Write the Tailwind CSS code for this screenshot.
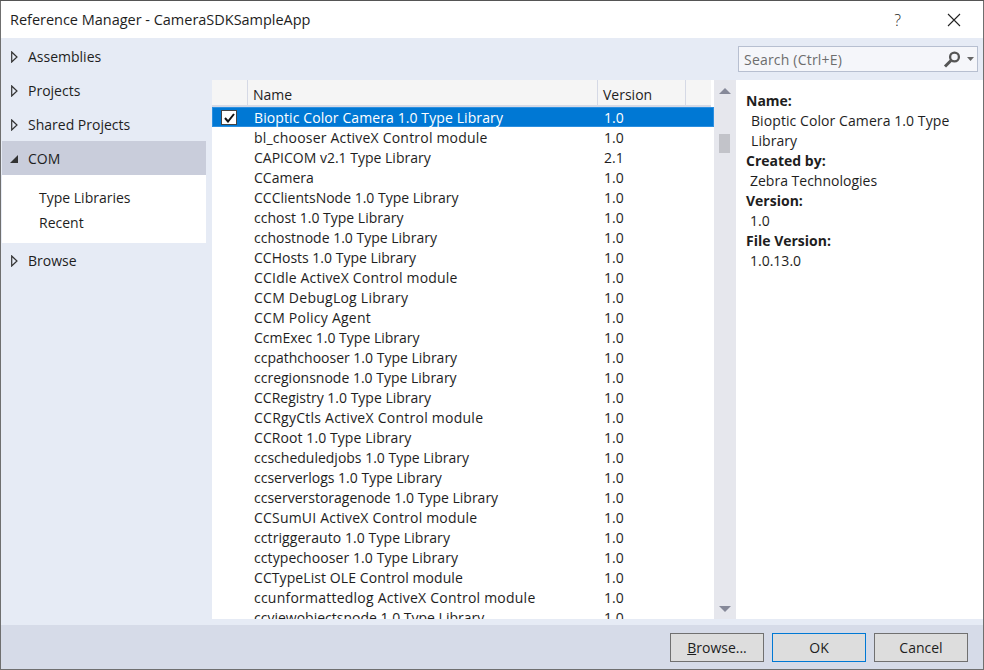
<!DOCTYPE html>
<html>
<head>
<meta charset="utf-8">
<script src="https://cdn.jsdelivr.net/npm/@tailwindcss/browser@4"></script>
</head>
<body class="m-0 w-[984px] h-[670px] overflow-hidden bg-white font-['Open_Sans','Noto_Sans',sans-serif] text-[14px] leading-[20px] text-[#1e1e1e]">
<div class="w-[984px] h-[670px] flex flex-col border-x border-b border-[#6f6f6f]">
  <div class="h-[1px] bg-[#555] -mx-[1px] shrink-0"></div>
  <header class="h-[37px] shrink-0 flex items-center justify-between bg-white pl-[9px] pr-[10px]">
    <span class="text-[14.5px] tracking-[-0.02px]">Reference Manager - CameraSDKSampleApp</span>
    <div class="flex items-center gap-[46px]">
      <span class="text-[16px] font-light">?</span>
      <svg width="14" height="14" viewBox="0 0 14 14" class="mr-[12px]"><path d="M1 1L13 13M13 1L1 13" stroke="#222" stroke-width="1.1" fill="none"/></svg>
    </div>
  </header>
  <main class="flex-1 min-h-0 bg-[#e6ebf5] flex flex-col">
    <div class="flex-1 min-h-0 flex pb-[6px]">
      <nav class="w-[211px] shrink-0 pt-[1px] pl-[1px] pr-[6px]">
        <div class="h-[34px] flex items-center gap-[10px] pl-[9px] pt-[2px]"><svg width="7" height="12" viewBox="0 0 7 12"><path d="M0.7 1L6 6L0.7 11Z" fill="none" stroke="#333" stroke-width="1.2"/></svg><span>Assemblies</span></div>
        <div class="h-[34px] flex items-center gap-[10px] pl-[9px] pt-[2px]"><svg width="7" height="12" viewBox="0 0 7 12"><path d="M0.7 1L6 6L0.7 11Z" fill="none" stroke="#333" stroke-width="1.2"/></svg><span>Projects</span></div>
        <div class="h-[34px] flex items-center gap-[10px] pl-[9px] pt-[2px]"><svg width="7" height="12" viewBox="0 0 7 12"><path d="M0.7 1L6 6L0.7 11Z" fill="none" stroke="#333" stroke-width="1.2"/></svg><span>Shared Projects</span></div>
        <div class="h-[34px] flex items-center gap-[9px] pl-[8px] pt-[2px] bg-[#c9cddb]"><svg width="9" height="9" viewBox="0 0 9 9"><path d="M0 8H8V0Z" fill="#333"/></svg><span>COM</span></div>
        <div class="h-[68px] bg-white pl-[37px] pt-[13px] flex flex-col gap-[5px]"><span>Type Libraries</span><span>Recent</span></div>
        <div class="h-[34px] flex items-center gap-[10px] pl-[9px] pt-[2px]"><svg width="7" height="12" viewBox="0 0 7 12"><path d="M0.7 1L6 6L0.7 11Z" fill="none" stroke="#333" stroke-width="1.2"/></svg><span>Browse</span></div>
      </nav>
      <div class="flex-1 min-w-0 flex flex-col">
        <div class="h-[42px] shrink-0 flex justify-end items-start pt-[8px] pr-[5px]">
          <div class="w-[240px] h-[26px] bg-[#f5f6fa] border border-[#b7bfd0] flex items-center justify-between pl-[5px] pr-[3px]">
            <span class="text-[#6d6d6d] pt-[1px] tracking-[0.2px]">Search (Ctrl+E)</span>
            <div class="flex items-center gap-[6px]">
              <svg width="18" height="17" viewBox="0 0 18 17"><circle cx="11.5" cy="6" r="4.4" fill="none" stroke="#555" stroke-width="2.3"/><path d="M8 9.5L2 15.5" stroke="#555" stroke-width="3"/></svg>
              <svg width="7" height="4" viewBox="0 0 7 4"><path d="M0 0H7L3.5 4Z" fill="#666"/></svg>
            </div>
          </div>
        </div>
        <div class="flex-1 min-h-0 flex bg-white">
          <div class="w-[502px] shrink-0 flex flex-col overflow-hidden">
            <div class="h-[27px] shrink-0 mr-[3px] flex bg-[#f5f5f5] border-b-2 border-[#d5d9e5]">
              <div class="w-[36px] border-r border-[#d5d9e5]"></div>
              <div class="w-[350px] border-r border-[#d5d9e5] pl-[5px] pt-[5px]">Name</div>
              <div class="w-[88px] border-r border-[#d5d9e5] pl-[5px] pt-[5px]">Version</div>
            </div>
            <div class="overflow-hidden flex-1 min-h-0 [&>div]:pt-[1px]">
              <div class="h-[20px] flex bg-[#0078d4] text-white shadow-[inset_0_0_0_1px_#2b8fe0]"><div class="w-[36px] pl-[9px] pt-[2px]"><div class="w-[16px] h-[15px] bg-white border border-[#444] flex items-center justify-center"><svg width="11" height="10" viewBox="0 0 11 10"><path d="M1 5L4 8.5L10 1" fill="none" stroke="#111" stroke-width="2"/></svg></div></div><div class="w-[350px] pl-[6px] tracking-[0.1px]">Bioptic Color Camera 1.0 Type Library</div><div class="pl-[6px]">1.0</div></div>
              <div class="h-[20px] flex"><div class="w-[386px] pl-[42px] tracking-[0.2px]">bl_chooser ActiveX Control module</div><div class="pl-[6px]">1.0</div></div>
              <div class="h-[20px] flex"><div class="w-[386px] pl-[42px]">CAPICOM v2.1 Type Library</div><div class="pl-[6px]">2.1</div></div>
              <div class="h-[20px] flex"><div class="w-[386px] pl-[42px]">CCamera</div><div class="pl-[6px]">1.0</div></div>
              <div class="h-[20px] flex"><div class="w-[386px] pl-[42px]">CCClientsNode 1.0 Type Library</div><div class="pl-[6px]">1.0</div></div>
              <div class="h-[20px] flex"><div class="w-[386px] pl-[42px]">cchost 1.0 Type Library</div><div class="pl-[6px]">1.0</div></div>
              <div class="h-[20px] flex"><div class="w-[386px] pl-[42px]">cchostnode 1.0 Type Library</div><div class="pl-[6px]">1.0</div></div>
              <div class="h-[20px] flex"><div class="w-[386px] pl-[42px]">CCHosts 1.0 Type Library</div><div class="pl-[6px]">1.0</div></div>
              <div class="h-[20px] flex"><div class="w-[386px] pl-[42px] tracking-[0.2px]">CCIdle ActiveX Control module</div><div class="pl-[6px]">1.0</div></div>
              <div class="h-[20px] flex"><div class="w-[386px] pl-[42px] tracking-[0.25px]">CCM DebugLog Library</div><div class="pl-[6px]">1.0</div></div>
              <div class="h-[20px] flex"><div class="w-[386px] pl-[42px] tracking-[0.25px]">CCM Policy Agent</div><div class="pl-[6px]">1.0</div></div>
              <div class="h-[20px] flex"><div class="w-[386px] pl-[42px]">CcmExec 1.0 Type Library</div><div class="pl-[6px]">1.0</div></div>
              <div class="h-[20px] flex"><div class="w-[386px] pl-[42px]">ccpathchooser 1.0 Type Library</div><div class="pl-[6px]">1.0</div></div>
              <div class="h-[20px] flex"><div class="w-[386px] pl-[42px]">ccregionsnode 1.0 Type Library</div><div class="pl-[6px]">1.0</div></div>
              <div class="h-[20px] flex"><div class="w-[386px] pl-[42px]">CCRegistry 1.0 Type Library</div><div class="pl-[6px]">1.0</div></div>
              <div class="h-[20px] flex"><div class="w-[386px] pl-[42px] tracking-[0.25px]">CCRgyCtls ActiveX Control module</div><div class="pl-[6px]">1.0</div></div>
              <div class="h-[20px] flex"><div class="w-[386px] pl-[42px] tracking-[0.08px]">CCRoot 1.0 Type Library</div><div class="pl-[6px]">1.0</div></div>
              <div class="h-[20px] flex"><div class="w-[386px] pl-[42px]">ccscheduledjobs 1.0 Type Library</div><div class="pl-[6px]">1.0</div></div>
              <div class="h-[20px] flex"><div class="w-[386px] pl-[42px]">ccserverlogs 1.0 Type Library</div><div class="pl-[6px]">1.0</div></div>
              <div class="h-[20px] flex"><div class="w-[386px] pl-[42px]">ccserverstoragenode 1.0 Type Library</div><div class="pl-[6px]">1.0</div></div>
              <div class="h-[20px] flex"><div class="w-[386px] pl-[42px] tracking-[0.2px]">CCSumUI ActiveX Control module</div><div class="pl-[6px]">1.0</div></div>
              <div class="h-[20px] flex"><div class="w-[386px] pl-[42px] tracking-[0.08px]">cctriggerauto 1.0 Type Library</div><div class="pl-[6px]">1.0</div></div>
              <div class="h-[20px] flex"><div class="w-[386px] pl-[42px] tracking-[0.08px]">cctypechooser 1.0 Type Library</div><div class="pl-[6px]">1.0</div></div>
              <div class="h-[20px] flex"><div class="w-[386px] pl-[42px] tracking-[0.08px]">CCTypeList OLE Control module</div><div class="pl-[6px]">1.0</div></div>
              <div class="h-[20px] flex"><div class="w-[386px] pl-[42px] tracking-[0.23px]">ccunformattedlog ActiveX Control module</div><div class="pl-[6px]">1.0</div></div>
              <div class="h-[20px] flex"><div class="w-[386px] pl-[42px]">ccviewobjectsnode 1.0 Type Library</div><div class="pl-[6px]">1.0</div></div>
            </div>
          </div>
          <div class="w-[22px] shrink-0 bg-[#e6e7ed] relative flex flex-col items-center justify-between pt-[8px] pb-[7px]">
            <svg width="12" height="6" viewBox="0 0 12 6"><path d="M0 6H12L6 0Z" fill="#868999"/></svg>
            <div class="absolute left-[5px] top-[54px] w-[11px] h-[19px] bg-[#c2c3c9]"></div>
            <svg width="12" height="6" viewBox="0 0 12 6"><path d="M0 0H12L6 6Z" fill="#868999"/></svg>
          </div>
          <aside class="flex-1 min-w-0 bg-white pl-[10px] pr-[20px] pt-[11px]">
            <div class="font-bold">Name:</div>
            <div class="pl-[5px] tracking-[0.08px]">Bioptic Color Camera 1.0 Type Library</div>
            <div class="font-bold">Created by:</div>
            <div class="pl-[4px]">Zebra Technologies</div>
            <div class="font-bold">Version:</div>
            <div class="pl-[4px]">1.0</div>
            <div class="font-bold">File Version:</div>
            <div class="pl-[4px]">1.0.13.0</div>
          </aside>
        </div>
      </div>
    </div>
    <footer class="h-[44px] shrink-0 bg-[#d6dbe8] flex items-start justify-end gap-[8px] pt-[8px] pr-[15px]">
      <button class="w-[94px] h-[29px] bg-[#dddddd] border border-[#707070] pt-[1px] text-[14px] leading-[20px]"><span class="underline">B</span>rowse...</button>
      <button class="w-[94px] h-[29px] bg-[#dddddd] border border-[#0078d4] pt-[1px] text-[14px] leading-[20px]">OK</button>
      <button class="w-[94px] h-[29px] bg-[#dddddd] border border-[#707070] pt-[1px] text-[14px] leading-[20px]">Cancel</button>
    </footer>
  </main>
</div>
</body>
</html>
